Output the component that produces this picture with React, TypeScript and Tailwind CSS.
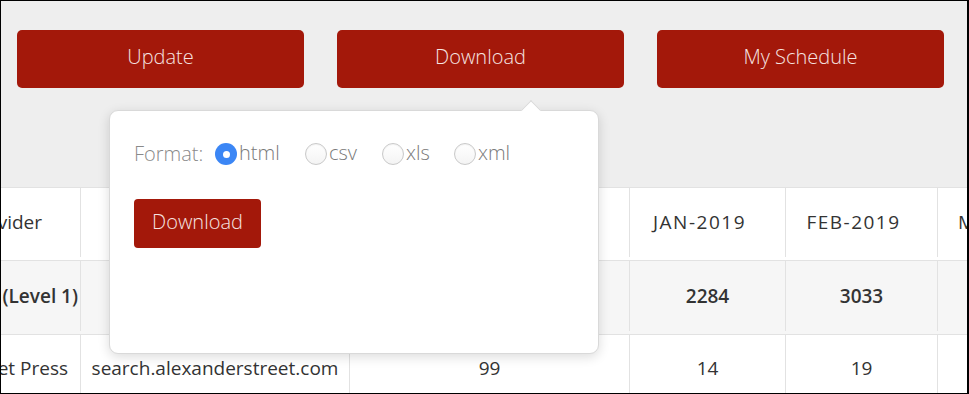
import React from 'react'

const FONT = { fontFamily: '"Open Sans", Lato, sans-serif' }

const formats = [
  { id: 'html', w: 'w-[90px]' },
  { id: 'csv', w: 'w-[77px]' },
  { id: 'xls', w: 'w-[72px]' },
  { id: 'xml', w: 'w-auto' },
]

function Radio({ checked }: { checked?: boolean }) {
  if (checked) {
    return (
      <span className="flex h-[22px] w-[22px] shrink-0 items-center justify-center rounded-full bg-[#3b86f5]">
        <span className="h-[7px] w-[7px] rounded-full bg-white" />
      </span>
    )
  }
  return <span className="h-[22px] w-[22px] shrink-0 rounded-full border border-[#c9c9c9] bg-gradient-to-b from-white to-[#f4f4f4] shadow-[inset_0_1px_1px_rgba(0,0,0,0.05)]" />
}

function TopButton({ label }: { label: string }) {
  return (
    <button className="h-[58px] w-[287px] rounded-[5px] bg-[#a3180a] pb-[4px] text-[20px] font-light text-[#f6e4e1]">
      {label}
    </button>
  )
}

function DownloadPopover() {
  return (
    <div className="absolute left-[108px] top-[109px] h-[244px] w-[490px] rounded-[9px] border border-[#d9d9d9] bg-white shadow-[0_3px_12px_rgba(0,0,0,0.14)]">
      <span className="absolute left-[414px] top-[-8px] h-[14px] w-[14px] rotate-45 border-l border-t border-[#d9d9d9] bg-white" />
      <div className="flex items-center pl-[24px] pt-[30px] text-[20px] font-light leading-[24px] text-[#8a8a8a]">
        <span className="w-[81px]">Format:</span>
        {formats.map((f, i) => (
          <label key={f.id} className={`${f.w} flex items-center gap-[2px] text-[#7a7a7a]`}>
            <Radio checked={i === 0} />
            <span className="pb-[2px]">{f.id}</span>
          </label>
        ))}
      </div>
      <button className="ml-[24px] mt-[32px] h-[49px] w-[127px] rounded-[4px] bg-[#a3180a] pb-[3px] text-[20px] font-light text-[#f6e4e1]">
        Download
      </button>
    </div>
  )
}

const cols = 'grid grid-cols-[80px_269px_280px_156px_152px_1fr]'
const cell = 'flex items-center justify-center border-r border-[#e2e2e2]'
const first = 'flex items-center justify-end overflow-hidden border-r border-[#e2e2e2]'

export default function App() {
  return (
    <div style={FONT} className="relative h-[394px] w-[969px] overflow-hidden border-b border-l border-r-2 border-t border-black bg-white">
      <div className="flex h-[186px] gap-[33px] bg-[#eeeeee] pl-[16px] pt-[29px]">
        <TopButton label="Update" />
        <TopButton label="Download" />
        <TopButton label="My Schedule" />
      </div>

      <div className="whitespace-nowrap border-t border-[#e2e2e2] text-[19px] text-[#333]">
        <div className={`${cols} h-[73px] border-b border-[#e2e2e2] pb-[3px]`}>
          <div className={`${first} pr-[38px]`}>Provider</div>
          <div className="border-r border-[#e2e2e2]" />
          <div className="border-r border-[#e2e2e2]" />
          <div className={`${cell} pr-[16px] tracking-[1.5px]`}>JAN-2019</div>
          <div className={`${cell} pr-[16px] tracking-[1.5px]`}>FEB-2019</div>
          <div className="flex items-center overflow-hidden pl-[20px] tracking-[1.5px]">MAR-2019</div>
        </div>
        <div className={`${cols} h-[74px] border-b border-[#e2e2e2] bg-[#f6f6f6] pb-[3px] font-semibold`}>
          <div className={`${first} pr-[2px]`}>Total (Level 1)</div>
          <div className="border-r border-[#e2e2e2]" />
          <div className="border-r border-[#e2e2e2]" />
          <div className={cell}>2284</div>
          <div className={cell}>3033</div>
          <div />
        </div>
        <div className={`${cols} h-[74px] pb-[8px]`}>
          <div className={`${first} pr-[12px]`}>Alexander Street Press</div>
          <div className={cell}>search.alexanderstreet.com</div>
          <div className={cell}>99</div>
          <div className={cell}>14</div>
          <div className={cell}>19</div>
          <div />
        </div>
      </div>

      <DownloadPopover />
    </div>
  )
}
